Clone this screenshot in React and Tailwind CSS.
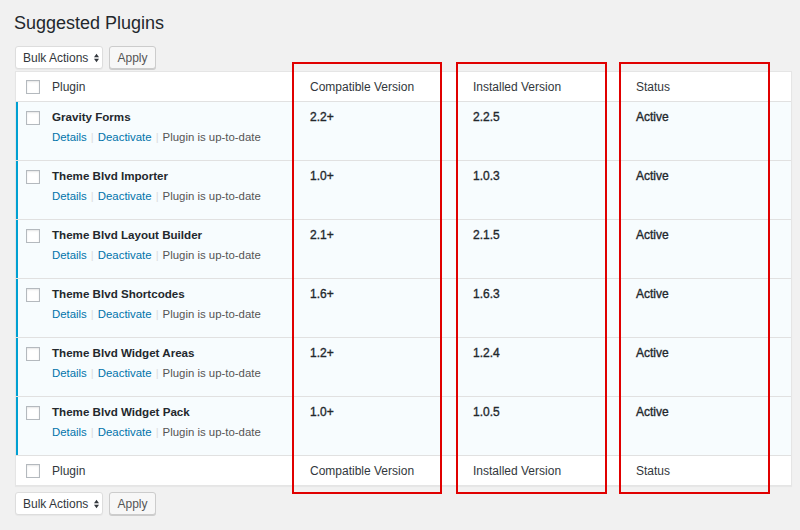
import React from "react";

const plugins = [
  { name: "Gravity Forms", compat: "2.2+", inst: "2.2.5" },
  { name: "Theme Blvd Importer", compat: "1.0+", inst: "1.0.3" },
  { name: "Theme Blvd Layout Builder", compat: "2.1+", inst: "2.1.5" },
  { name: "Theme Blvd Shortcodes", compat: "1.6+", inst: "1.6.3" },
  { name: "Theme Blvd Widget Areas", compat: "1.2+", inst: "1.2.4" },
  { name: "Theme Blvd Widget Pack", compat: "1.0+", inst: "1.0.5" },
];

function Checkbox() {
  return (
    <div className="w-[14px] h-[14px] bg-white border border-[#b4b9be] shadow-[inset_0_1px_2px_rgba(0,0,0,0.1)]" />
  );
}

function Toolbar() {
  return (
    <div className="flex items-center gap-[6px] ml-[15px]">
      <div className="h-[23px] w-[88px] bg-white border border-[#ddd] rounded-[3px] shadow-[0_1px_1px_rgba(0,0,0,0.04)] flex items-center pl-[7px] text-[12px] whitespace-nowrap text-[#32373c]">
        <span>Bulk Actions</span>
        <svg width="5" height="10" viewBox="0 0 6 10" className="ml-[6px]">
          <path d="M0 4 L3 0 L6 4 Z" fill="#32373c" />
          <path d="M0 6 L3 10 L6 6 Z" fill="#32373c" />
        </svg>
      </div>
      <div className="h-[23px] w-[47px] bg-[#f7f7f7] border border-[#ccc] rounded-[3px] shadow-[0_1px_0_#ccc] flex items-center justify-center text-[12px] text-[#555]">
        Apply
      </div>
    </div>
  );
}

const grid = "grid grid-cols-[26px_258px_163px_163px_1fr]";

function HeadRow({ bottom }) {
  return (
    <div className={`${grid} items-center text-[12px] text-[#32373c] bg-white ${bottom ? "h-[29px]" : "h-[30px] border-b border-[#e1e1e1]"}`}>
      <div className="pl-[10px]"><Checkbox /></div>
      <div className="pl-[10px]">Plugin</div>
      <div className="pl-[10px]">Compatible Version</div>
      <div className="pl-[10px]">Installed Version</div>
      <div className="pl-[10px]">Status</div>
    </div>
  );
}

const val = "pl-[10px] pt-[6px] text-[12px] leading-[19px] text-[#23282d] [-webkit-text-stroke:0.35px_#23282d]";

export default function App() {
  return (
    <div className="relative min-h-[530px] w-[800px] bg-[#f1f1f1] font-['Liberation_Sans',Arial,sans-serif] overflow-hidden">
      <h1 className="pl-[14px] pt-[11px] pb-[11px] text-[18px] leading-[24px] text-[#23282d]">Suggested Plugins</h1>
      <Toolbar />
      <div className="ml-[15px] mt-[2px] w-[777px] bg-white border border-[#e5e5e5] shadow-[0_1px_1px_rgba(0,0,0,0.04)]">
        <HeadRow />
        {plugins.map((p) => (
          <div
            key={p.name}
            className={`${grid} h-[59px] bg-[#f7fcfe] shadow-[inset_2px_0_0_#00a0d2] border-b border-[#e1e1e1]`}
          >
            <div className="pl-[10px] pt-[9px]"><Checkbox /></div>
            <div className="pl-[10px] pt-[5px]">
              <div className="text-[11.6px] leading-[19px] font-bold text-[#23282d]">{p.name}</div>
              <div className="text-[11.4px] leading-[19px] mt-[2px] text-[#555] whitespace-nowrap">
                <span className="text-[#0073aa]">Details</span>
                <span className="text-[#ddd] px-[4px]">|</span>
                <span className="text-[#0073aa]">Deactivate</span>
                <span className="text-[#ddd] px-[4px]">|</span>
                <span>Plugin is up-to-date</span>
              </div>
            </div>
            <div className={val}>{p.compat}</div>
            <div className={val}>{p.inst}</div>
            <div className={val}>Active</div>
          </div>
        ))}
        <HeadRow bottom />
      </div>
      <div className="mt-[6px]">
        <Toolbar />
      </div>
      <div className="absolute left-[292px] top-[62px] w-[150px] h-[432px] border-2 border-[#e00000]" />
      <div className="absolute left-[456px] top-[62px] w-[151px] h-[432px] border-2 border-[#e00000]" />
      <div className="absolute left-[619px] top-[62px] w-[151px] h-[432px] border-2 border-[#e00000]" />
    </div>
  );
}
